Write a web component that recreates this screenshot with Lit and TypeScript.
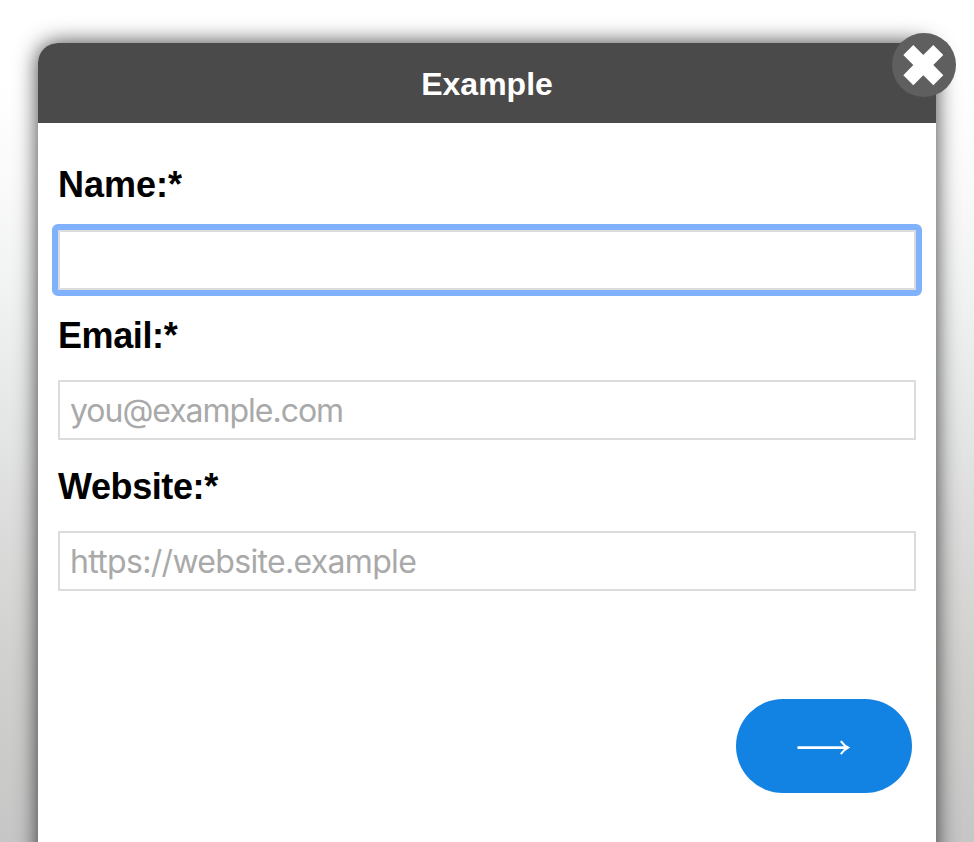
import { LitElement, html, css } from "lit";
import { customElement, property } from "lit/decorators.js";

@customElement("form-field")
class FormField extends LitElement {
  @property() label = "";
  @property() placeholder = "";
  @property({ type: Boolean, reflect: true }) active = false;

  static styles = css`
    :host { display: block; height: 150.4px; }
    .label {
      display: block;
      height: 66px;
      font: bold 36px/44px "Liberation Sans", Arial, sans-serif;
      letter-spacing: var(--label-tracking, 0);
      color: #000;
      white-space: nowrap;
    }
    :host([active]) .label { line-height: 42px; }
    .frame { display: block; height: 60px; }
    :host([active]) .frame {
      margin: -6px;
      border: 6px solid #80b2fc;
      border-radius: 6px;
      background: #80b2fc;
    }
    .input {
      display: block;
      box-sizing: border-box;
      width: 100%;
      height: 60px;
      margin: 0;
      padding: var(--text-shift, 0) 10px 0;
      border: 2px solid #dcdcdc;
      border-radius: 0;
      background: #fff;
      font: 32px "Inter", sans-serif;
      font-variant-ligatures: none;
      letter-spacing: var(--input-tracking, 0);
      outline: none;
    }
    .input::placeholder { color: #a9a9a9; opacity: 1; }
  `;

  render() {
    return html`
      <label class="label" for="control">${this.label}</label>
      <div class="frame">
        <input class="input" id="control" placeholder=${this.placeholder} />
      </div>
    `;
  }
}

@customElement("app-root")
class AppRoot extends LitElement {
  static styles = css`
    :host {
      display: block;
      box-sizing: border-box;
      height: 842px;
      padding: 43px 38px 0;
      overflow: hidden;
      background: linear-gradient(#fff 0, #fff 80px, #fafafa 180px, #f1f2f2 290px, #e9ebeb 375px, #dddddd 510px, #d0d0ce 670px, #c6c6c6 842px);
    }
    .dialog {
      position: relative;
      display: flex;
      flex-direction: column;
      height: 900px;
      border-radius: 20px;
      background: #fff;
      box-shadow: 0 0 22px rgba(0, 0, 0, 0.76);
    }
    .header {
      flex: none;
      height: 80px;
      border-radius: 20px 20px 0 0;
      background: #4a4a4a;
      color: #fff;
      text-align: center;
      font: bold 32px/82px "Liberation Sans", Arial, sans-serif;
    }
    .close {
      position: absolute;
      top: -10px;
      right: -20px;
      width: 64px;
      height: 64px;
      padding: 0;
      border: 0;
      border-radius: 50%;
      background: #5f5f5f;
    }
    .icon { display: block; }
    .form { padding: 41px 20px 0; }
    .email { --label-tracking: -0.4px; --input-tracking: -1.03px; }
    .website { --label-tracking: -0.4px; --input-tracking: -0.68px; --text-shift: 1px; }
    .actions { display: flex; justify-content: flex-end; padding: 83.8px 4px 0 0; }
    .next {
      display: grid;
      place-items: center;
      width: 176px;
      height: 94px;
      padding: 0;
      border: 0;
      border-radius: 50px;
      background: #1283e2;
    }
  `;

  render() {
    return html`
      <section class="dialog">
        <header class="header">Example</header>
        <form class="form">
          <form-field label="Name:*" active></form-field>
          <form-field class="email" label="Email:*" placeholder="you@example.com"></form-field>
          <form-field class="website" label="Website:*" placeholder="https://website.example"></form-field>
          <div class="actions">
            <button class="next" type="button" aria-label="Next">
              <svg class="icon" width="176" height="94" viewBox="0 0 176 94">
                <path fill="#fff" d="M61.5 47.2H108L104 42.8L105.6 41.4Q109 46 114.2 48.6Q109 51.2 105.6 55.8L104 54.4L108 50H61.5Z" />
              </svg>
            </button>
          </div>
        </form>
        <button class="close" type="button" aria-label="Close">
          <svg class="icon" width="64" height="64" viewBox="0 0 64 64">
            <path fill="#fff" d="M21.3 12L31.3 22L41.3 12L51.3 22L41.3 32L51.3 42.2L41.3 52.2L31.3 42.2L21.3 52.2L11.3 42.2L21.3 32L11.3 22Z" />
          </svg>
        </button>
      </section>
    `;
  }
}
